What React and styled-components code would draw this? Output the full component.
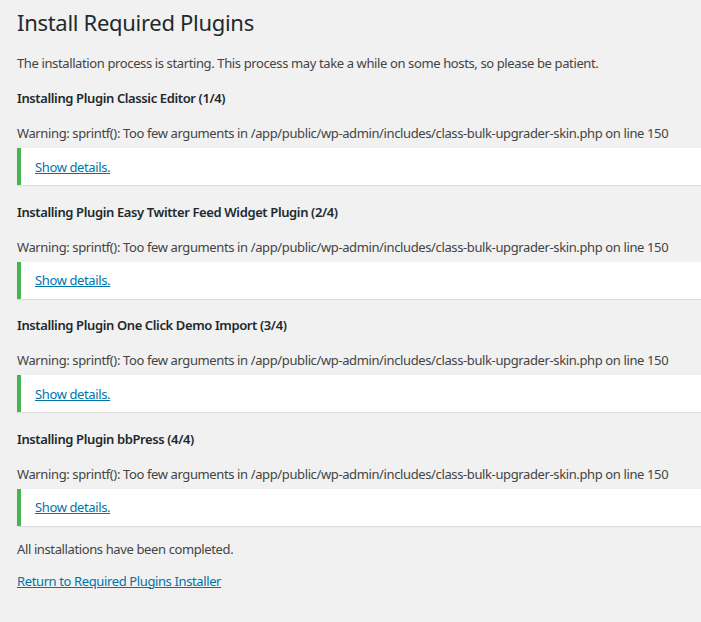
import styled, { createGlobalStyle } from "styled-components";

const GlobalStyle = createGlobalStyle`
  html, body {
    margin: 0;
    padding: 0;
    background: #f1f1f1;
    overflow: hidden;
  }
  body {
    font-family: "Noto Sans", "Open Sans", sans-serif;
    font-size: 13px;
    letter-spacing: -0.38px;
    color: #444;
  }
`

const SWrap = styled.div`
  display: flex;
  flex-direction: column;
  width: 701px;
  height: 622px;
  padding: 0 0 0 17px;
  box-sizing: border-box;
`

const STitle = styled.h1`
  margin: 8px 0 0;
  font-size: 22px;
  font-weight: 400;
  letter-spacing: -0.3px;
  line-height: 29px;
  color: #23282d;
`

const SText = styled.p`
  margin: ${({ $top }) => $top || 0}px 0 0;
  line-height: 20px;
  white-space: nowrap;
`

const SHeading = styled.h2`
  margin: ${({ $top }) => $top}px 0 0;
  font-size: 13px;
  font-weight: 600;
  line-height: 20px;
  color: #23282d;
`

const SNotice = styled.div`
  display: flex;
  align-items: center;
  height: 37px;
  margin-top: 5px;
  padding-left: 14px;
  background: #fff;
  border-left: 4px solid #46b450;
  box-shadow: 0 1px 1px rgba(0, 0, 0, 0.08);
`

const SLink = styled.a`
  color: #0073aa;
  text-decoration: underline;
  line-height: 20px;
  cursor: pointer;
`

const plugins = [
  "Classic Editor (1/4)",
  "Easy Twitter Feed Widget Plugin (2/4)",
  "One Click Demo Import (3/4)",
  "bbPress (4/4)",
]

const warning =
  "Warning: sprintf(): Too few arguments in /app/public/wp-admin/includes/class-bulk-upgrader-skin.php on line 150"

const PluginBlock = ({ name, first }) => (
  <>
    <SHeading $top={first ? 15 : 16.6}>Installing Plugin {name}</SHeading>
    <SText $top={15}>{warning}</SText>
    <SNotice>
      <SLink>Show details.</SLink>
    </SNotice>
  </>
)

const App = () => {
  return (
    <SWrap>
      <GlobalStyle />
      <STitle>Install Required Plugins</STitle>
      <SText $top={16}>
        The installation process is starting. This process may take a while on some hosts, so please be patient.
      </SText>
      {plugins.map((p, i) => (
        <PluginBlock key={p} name={p} first={i === 0} />
      ))}
      <SText $top={13}>All installations have been completed.</SText>
      <SText $top={12}>
        <SLink>Return to Required Plugins Installer</SLink>
      </SText>
    </SWrap>
  )
}

export default App;
